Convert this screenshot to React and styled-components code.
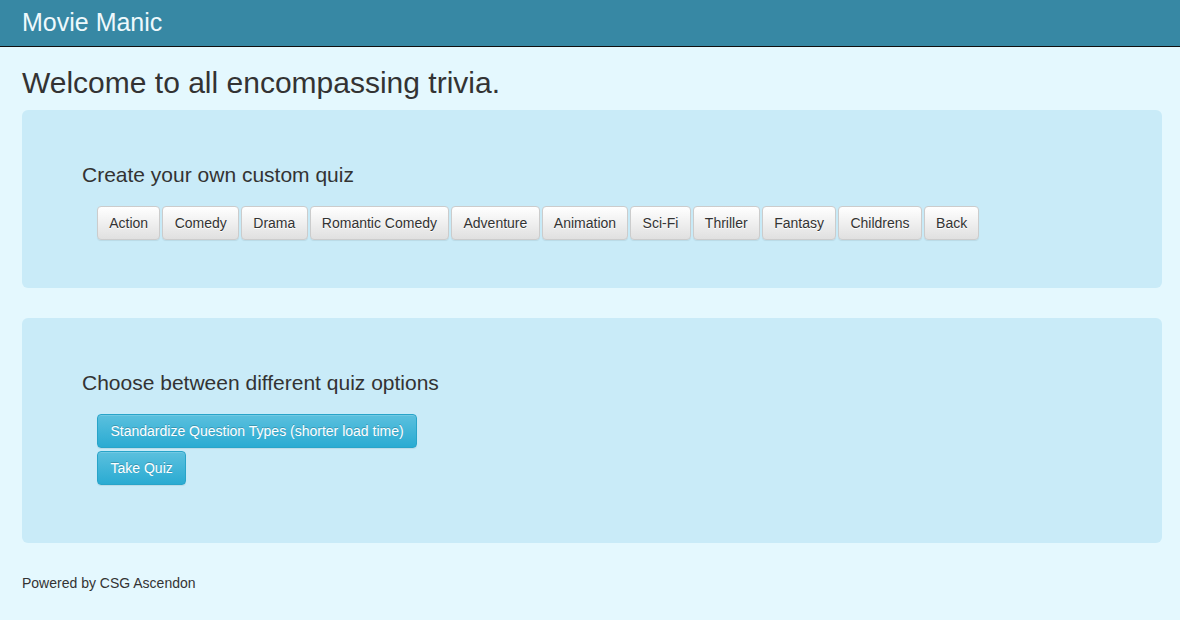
import React from 'react';
import styled, { createGlobalStyle } from 'styled-components';

const GlobalStyle = createGlobalStyle`
  html, body {
    margin: 0;
    padding: 0;
    background: #e4f8fe;
  }
  body {
    font-family: "Liberation Sans", Arial, Helvetica, sans-serif;
    font-size: 14px;
    line-height: 20px;
    color: #333;
  }
`;

const Navbar = styled.header`
  height: 47px;
  border-bottom: 1px solid #101010;
  background: #3788a4;
  display: flex;
  align-items: center;
  padding: 0 22px 2px;
  box-sizing: border-box;
`;

const Brand = styled.a`
  font-size: 25px;
  line-height: 28px;
  color: #eef9fc;
  text-decoration: none;
`;

const Container = styled.main`
  width: 1140px;
  margin-left: 22px;
`;

const PageTitle = styled.h1`
  font-size: 30px;
  font-weight: 400;
  line-height: 33px;
  margin: 19px 0 11px;
`;

const Jumbotron = styled.section`
  background: #c9ebf8;
  border-radius: 6px;
  padding: 48px 60px ${props => props.extra ? 58 : 48}px;
  margin-bottom: 30px;
`;

const SectionTitle = styled.h3`
  font-size: 21px;
  font-weight: 400;
  line-height: 23px;
  margin: 5px 0 20px;
`;

const ButtonRow = styled.div`
  display: flex;
  flex-wrap: wrap;
  gap: 2px;
  padding-left: 15px;
`;

const ButtonStack = styled.div`
  display: flex;
  flex-direction: column;
  align-items: flex-start;
  gap: 3px;
  padding-left: 15px;
`;

const Button = styled.button`
  font-family: inherit;
  font-size: 14px;
  line-height: 20px;
  padding: 6px ${props => props.info ? '12.5px' : '11.25px'};
  border-radius: 4px;
  cursor: pointer;
  border: 1px solid ${props => props.info ? '#28a4c9' : '#ccc'};
  color: ${props => props.info ? '#fff' : '#333'};
  background: ${props => props.info
    ? 'linear-gradient(to bottom, #5bc0de 0%, #2aabd2 100%)'
    : 'linear-gradient(to bottom, #fff 0%, #e0e0e0 100%)'};
  text-shadow: ${props => props.info ? '0 -1px 0 rgba(0,0,0,.2)' : '0 1px 0 #fff'};
  box-shadow: inset 0 1px 0 rgba(255,255,255,.15), 0 1px 1px rgba(0,0,0,.075);
`;

const Footer = styled.footer`
  font-size: 14px;
  line-height: 20px;
`;

const genres = ['Action', 'Comedy', 'Drama', 'Romantic Comedy', 'Adventure', 'Animation', 'Sci-Fi', 'Thriller', 'Fantasy', 'Childrens', 'Back'];

export default function App() {
  return (
    <>
      <GlobalStyle />
      <Navbar>
        <Brand href="#">Movie Manic</Brand>
      </Navbar>
      <Container>
        <PageTitle>Welcome to all encompassing trivia.</PageTitle>
        <Jumbotron>
          <SectionTitle>Create your own custom quiz</SectionTitle>
          <ButtonRow>
            {genres.map(g => <Button key={g}>{g}</Button>)}
          </ButtonRow>
        </Jumbotron>
        <Jumbotron extra>
          <SectionTitle>Choose between different quiz options</SectionTitle>
          <ButtonStack>
            <Button info>Standardize Question Types (shorter load time)</Button>
            <Button info>Take Quiz</Button>
          </ButtonStack>
        </Jumbotron>
        <Footer>Powered by CSG Ascendon</Footer>
      </Container>
    </>
  );
}
